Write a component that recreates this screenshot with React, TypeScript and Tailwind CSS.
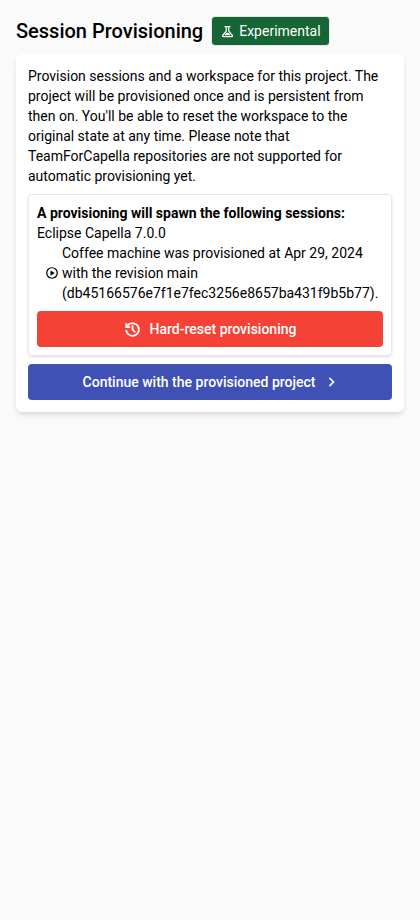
import React from "react";

const icons = {
  experiment:
    "M200-120q-51 0-72.5-45.5T138-250l222-270v-240h-40q-17 0-28.5-11.5T280-800q0-17 11.5-28.5T320-840h320q17 0 28.5 11.5T680-800q0 17-11.5 28.5T640-760h-40v240l222 270q32 39 10.5 84.5T760-120H200Zm80-120h400L544-400H416L280-240Zm-80 40h560L520-492v-268h-80v268L200-200Z",
  play: "m380-300 280-180-280-180v360ZM480-80q-83 0-156-31.5T197-197q-54-54-85.5-127T80-480q0-83 31.5-156T197-763q54-54 127-85.5T480-880q83 0 156 31.5T763-763q54 54 85.5 127T880-480q0 83-31.5 156T763-197q-54 54-127 85.5T480-80Zm0-80q134 0 227-93t93-227q0-134-93-227t-227-93q-134 0-227 93t-93 227q0 134 93 227t227 93Z",
  history:
    "M480-120q-138 0-240.5-91.5T122-440h82q14 104 92.5 172T480-200q117 0 198.5-81.5T760-480q0-117-81.5-198.5T480-760q-69 0-129 32t-101 88h110v80H120v-240h80v94q51-64 124.5-99T480-840q75 0 140.5 28.5t114 77q48.5 48.5 77 114T840-480q0 75-28.5 140.5t-77 114q-48.5 48.5-114 77T480-120Zm112-192L440-464v-216h80v184l128 128-56 56Z",
  chevron: "M504-480 320-664l56-56 240 240-240 240-56-56 184-184Z",
};

function Icon({ name, className }: { name: keyof typeof icons; className: string }) {
  return (
    <svg viewBox="0 -960 960 960" fill="currentColor" stroke="currentColor" className={`shrink-0 ${className}`}>
      <path d={icons[name]} />
    </svg>
  );
}

export default function App() {
  return (
    <div className="min-h-screen bg-[#fafafa] px-4 pt-4 font-['Roboto',sans-serif] text-sm leading-5 text-black">
      <div className="mb-2 flex items-center gap-2">
        <h2 className="text-xl leading-[30px] font-medium">Session Provisioning</h2>
        <div className="flex items-center gap-1 rounded-sm border border-gray-200 bg-[#166534] px-2 py-1 text-white">
          <Icon name="experiment" className="size-[15px] stroke-0" />
          <span>Experimental</span>
        </div>
      </div>
      <section className="flex flex-col gap-2 rounded-md bg-white p-3 shadow-md">
        <p>
          Provision sessions and a workspace for this project. The project will be provisioned once and is
          persistent from then on. You'll be able to reset the workspace to the original state at any time.
          Please note that TeamForCapella repositories are not supported for automatic provisioning yet.
        </p>
        <div className="rounded-sm border border-gray-200 p-2 shadow-sm">
          <div className="font-bold">A provisioning will spawn the following sessions:</div>
          <div>Eclipse Capella 7.0.0</div>
          <div className="ml-2 flex items-center gap-[3px]">
            <Icon name="play" className="size-3.5 stroke-0" />
            <div>
              Coffee machine was provisioned at Apr 29, 2024 with the revision main
              (db45166576e7f1e7fec3256e8657ba431f9b5b77).
            </div>
          </div>
          <button className="mt-2 flex h-9 w-full items-center justify-center gap-2 rounded bg-[#f44336] font-medium text-white">
            <Icon name="history" className="-ml-px size-[19px] stroke-[10]" />
            Hard-reset provisioning
          </button>
        </div>
        <button className="flex h-9 w-full items-center justify-center gap-2 rounded bg-[#3f51b5] pl-1 font-medium text-white">
          Continue with the provisioned project
          <Icon name="chevron" className="size-[18px] stroke-[14]" />
        </button>
      </section>
    </div>
  );
}
